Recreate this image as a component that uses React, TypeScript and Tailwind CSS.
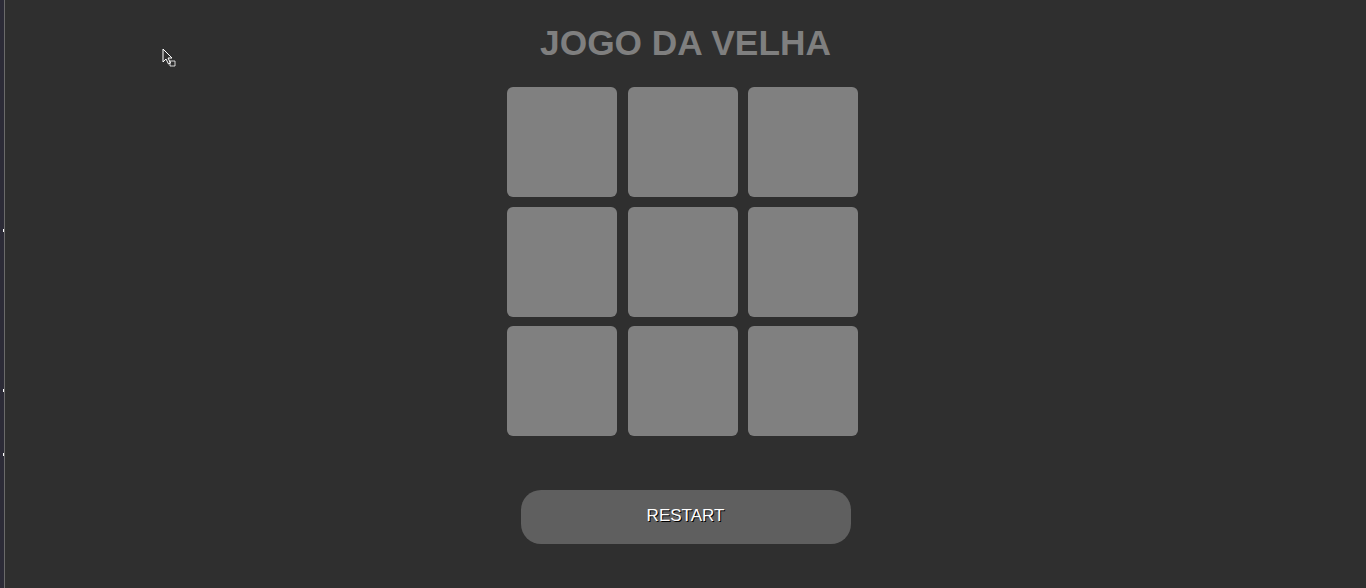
const cells = Array.from({ length: 9 }, (_, i) => i);

const App = () => {
  return (
    <div className="min-h-screen h-[588px] flex bg-[#2f2f2f] font-['Liberation_Sans',Arial,sans-serif] overflow-hidden">
      {/* window edge */}
      <div className="w-[4px] bg-[#2c2b37] flex flex-col">
        <div className="h-[229px]" />
        <div className="ml-[3px] w-px h-[3px] bg-white" />
        <div className="h-[157px]" />
        <div className="ml-[3px] w-px h-[3px] bg-white" />
        <div className="h-[61px]" />
        <div className="ml-[3px] w-px h-[3px] bg-white" />
      </div>
      <div className="w-px bg-[#6a6a6a]" />

      <div className="relative flex-1 flex flex-col items-center">
        {/* mouse pointer */}
        <svg
          className="absolute left-[157px] top-[48px]"
          width="14"
          height="20"
          viewBox="0 0 14 20"
        >
          <path
            d="M1 1 L1 14 L4 11 L6.5 16 L8.5 15 L6 10 L10 10 Z"
            fill="#2f2f2f"
            stroke="#ffffff"
            strokeWidth="1"
          />
          <path d="M8 13 L13 13 L13 18 L8 18 Z" fill="none" stroke="#ffffff" strokeWidth="0.8" />
        </svg>

        <h1 className="mt-[23px] text-[35.3px] leading-[40px] font-bold text-[#7f7f7f]">
          JOGO DA VELHA
        </h1>

        <div className="mt-[24px] mr-[6px] grid grid-cols-[110px_110px_110px] gap-x-[10.5px] gap-y-[9.5px]">
          {cells.map((c) => (
            <div key={c} className="w-[110px] h-[110px] rounded-md bg-[#808080]" />
          ))}
        </div>

        <button
          type="button"
          className="mt-[54px] w-[330px] h-[54px] pb-[2px] rounded-[20px] bg-[#5f5f5f] text-white text-[17px] [text-shadow:1px_1px_0_#000]"
        >
          RESTART
        </button>
      </div>
    </div>
  );
};

export default App;
